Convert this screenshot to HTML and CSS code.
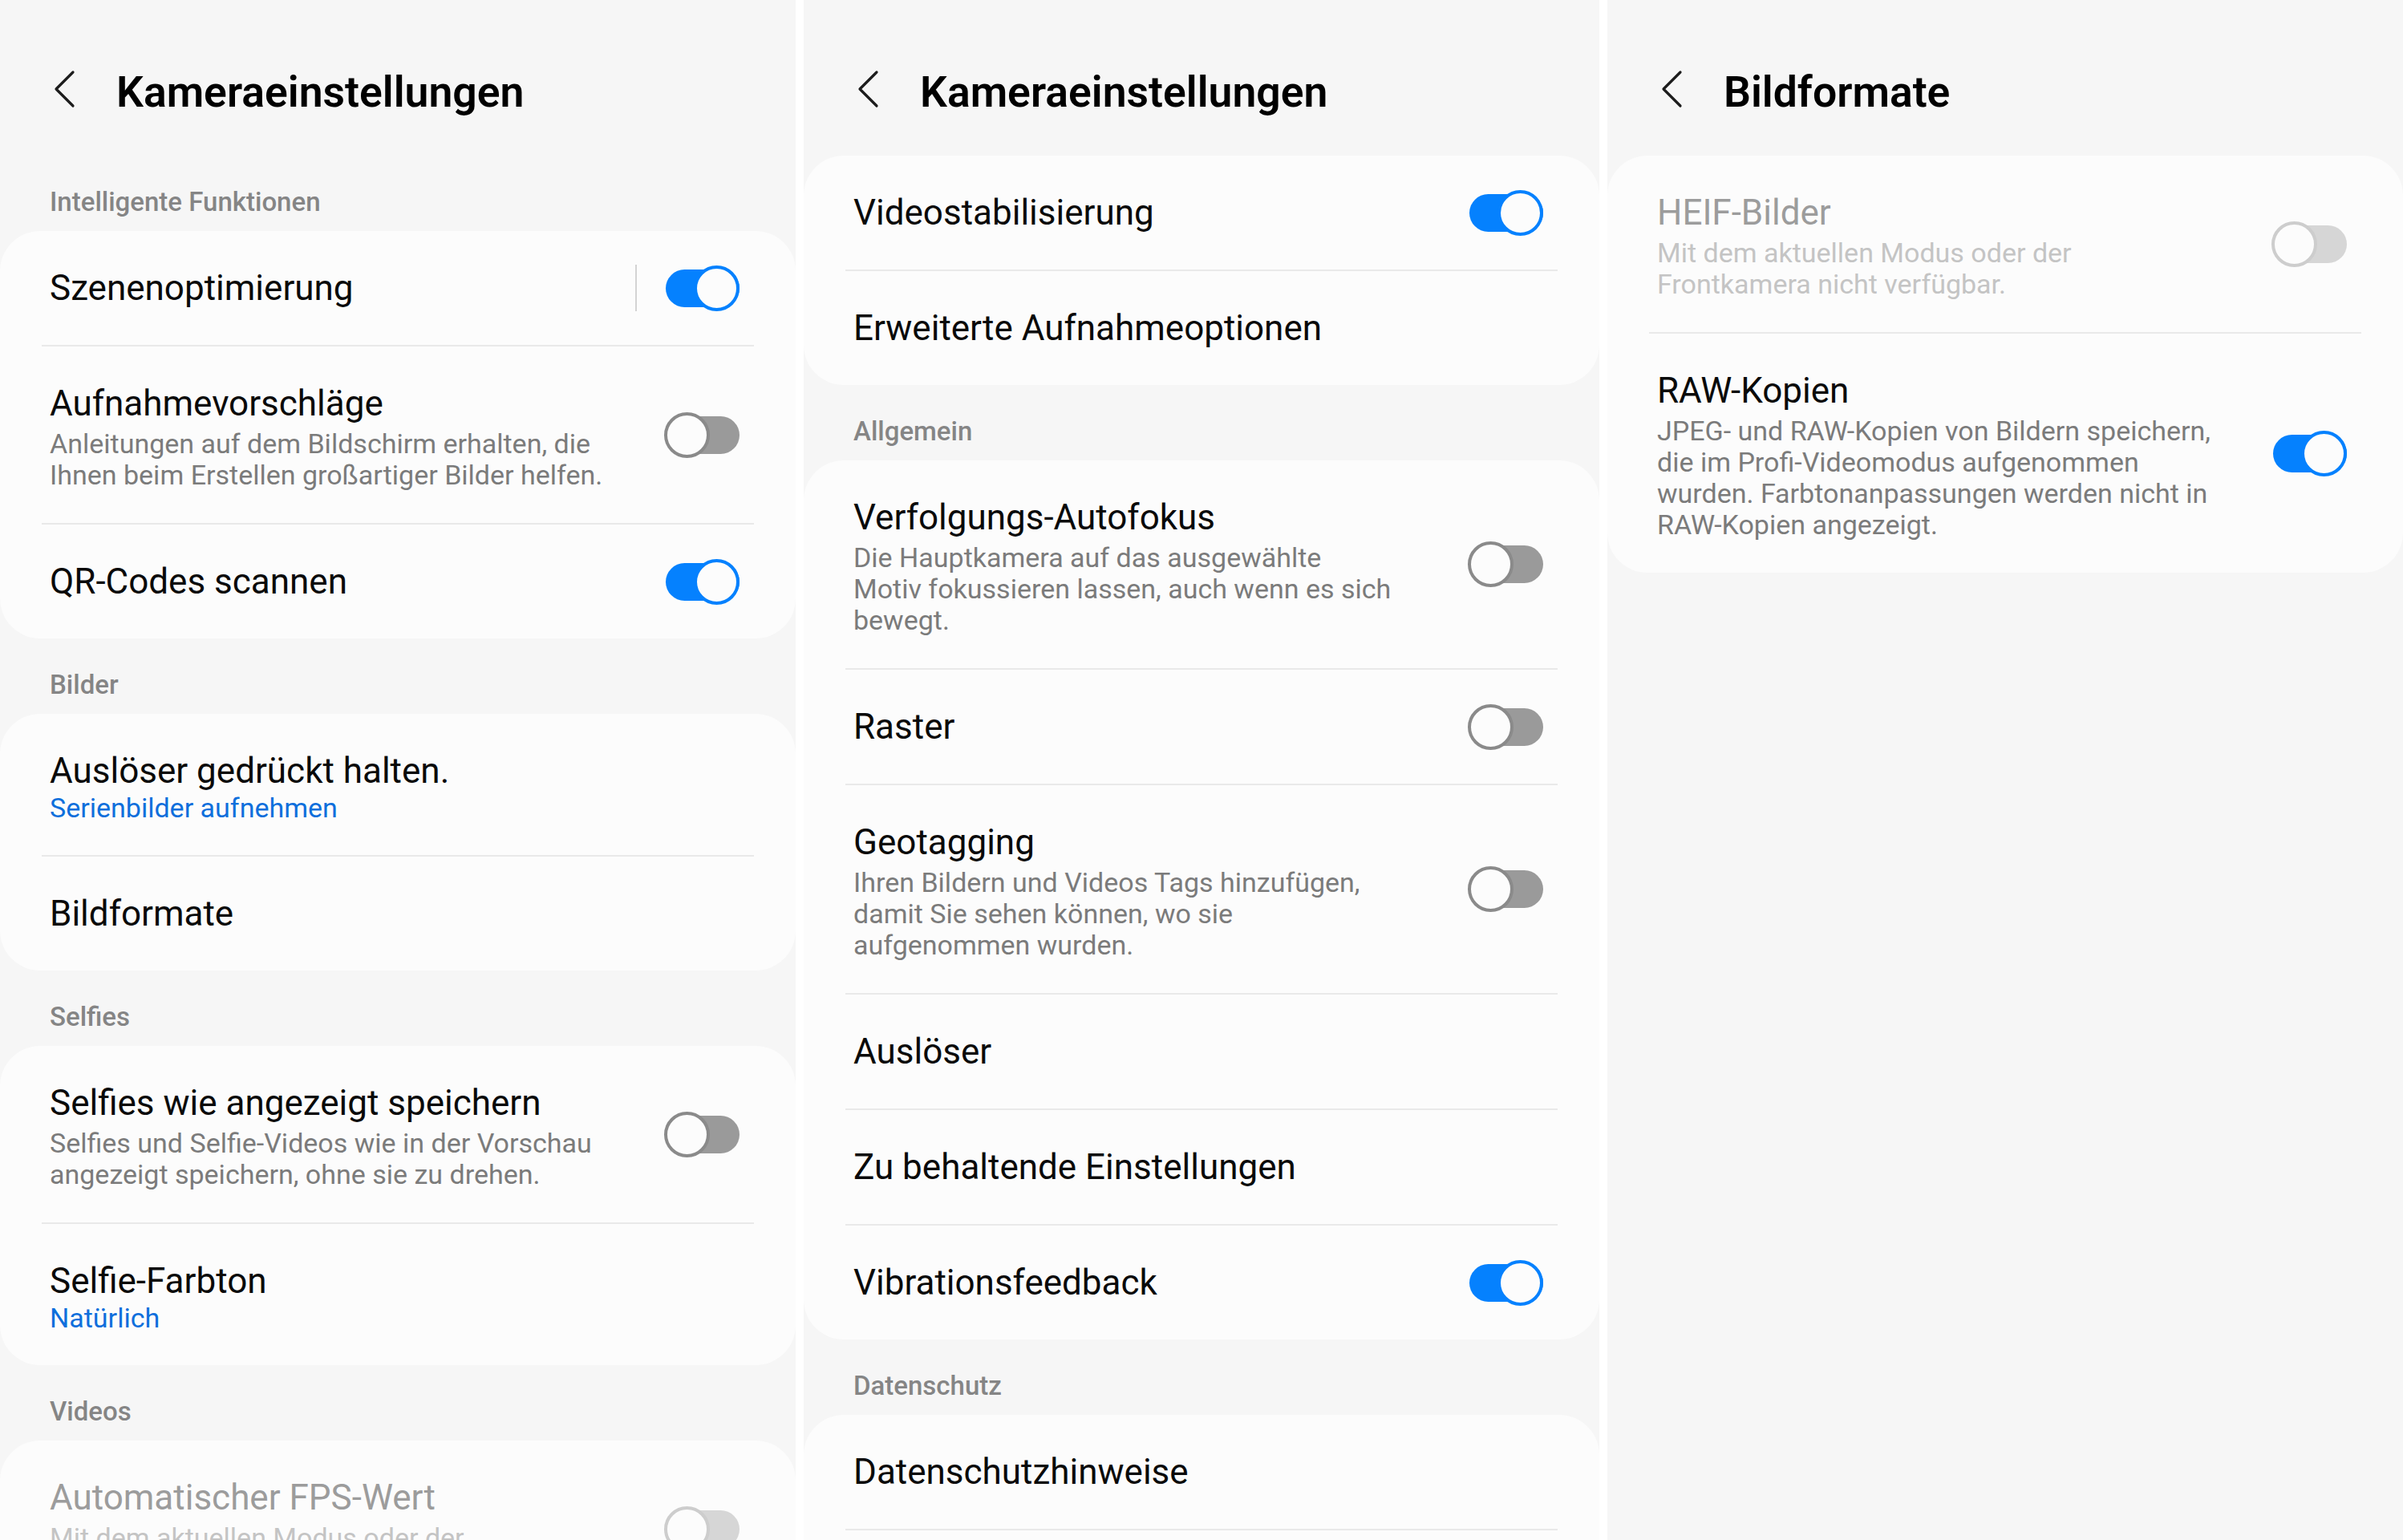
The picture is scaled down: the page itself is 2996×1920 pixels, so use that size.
FILE: index.html
```html
<!DOCTYPE html>
<html>
<head>
    <meta charset="UTF-8">
    <meta name="viewport" content="width=device-width, initial-scale=1.0">
    <title>Kameraeinstellungen</title>
    <link rel="stylesheet" href="styles.css">
</head>
<body>

<div class="screens">

    <!-- Bildschirm 1 -->
    <section class="panel">
        <header class="appbar">
            <svg class="back" viewBox="0 0 28 48"><polyline points="24,3 3,24 24,45"/></svg>
            <h1>Kameraeinstellungen</h1>
        </header>

        <div class="label">Intelligente Funktionen</div>
        <div class="card">
            <div class="row">
                <div class="text"><div class="title">Szenenoptimierung</div></div>
                <span class="vline"></span>
                <span class="switch on"></span>
            </div>
            <div class="row">
                <div class="text">
                    <div class="title">Aufnahmevorschläge</div>
                    <div class="sub">Anleitungen auf dem Bildschirm erhalten, die<br>Ihnen beim Erstellen großartiger Bilder helfen.</div>
                </div>
                <span class="switch"></span>
            </div>
            <div class="row">
                <div class="text"><div class="title">QR-Codes scannen</div></div>
                <span class="switch on"></span>
            </div>
        </div>

        <div class="label">Bilder</div>
        <div class="card">
            <div class="row">
                <div class="text">
                    <div class="title">Auslöser gedrückt halten.</div>
                    <div class="value">Serienbilder aufnehmen</div>
                </div>
            </div>
            <div class="row">
                <div class="text"><div class="title">Bildformate</div></div>
            </div>
        </div>

        <div class="label">Selfies</div>
        <div class="card">
            <div class="row">
                <div class="text">
                    <div class="title">Selfies wie angezeigt speichern</div>
                    <div class="sub">Selfies und Selfie-Videos wie in der Vorschau<br>angezeigt speichern, ohne sie zu drehen.</div>
                </div>
                <span class="switch"></span>
            </div>
            <div class="row">
                <div class="text">
                    <div class="title">Selfie-Farbton</div>
                    <div class="value">Natürlich</div>
                </div>
            </div>
        </div>

        <div class="label">Videos</div>
        <div class="card">
            <div class="row disabled">
                <div class="text">
                    <div class="title">Automatischer FPS-Wert</div>
                    <div class="sub">Mit dem aktuellen Modus oder der<br>Frontkamera nicht verfügbar.</div>
                </div>
                <span class="switch"></span>
            </div>
        </div>
    </section>

    <!-- Bildschirm 2 -->
    <section class="panel">
        <header class="appbar">
            <svg class="back" viewBox="0 0 28 48"><polyline points="24,3 3,24 24,45"/></svg>
            <h1>Kameraeinstellungen</h1>
        </header>

        <div class="card">
            <div class="row">
                <div class="text"><div class="title">Videostabilisierung</div></div>
                <span class="switch on"></span>
            </div>
            <div class="row">
                <div class="text"><div class="title">Erweiterte Aufnahmeoptionen</div></div>
            </div>
        </div>

        <div class="label">Allgemein</div>
        <div class="card">
            <div class="row">
                <div class="text">
                    <div class="title">Verfolgungs-Autofokus</div>
                    <div class="sub">Die Hauptkamera auf das ausgewählte<br>Motiv fokussieren lassen, auch wenn es sich<br>bewegt.</div>
                </div>
                <span class="switch"></span>
            </div>
            <div class="row">
                <div class="text"><div class="title">Raster</div></div>
                <span class="switch"></span>
            </div>
            <div class="row">
                <div class="text">
                    <div class="title">Geotagging</div>
                    <div class="sub">Ihren Bildern und Videos Tags hinzufügen,<br>damit Sie sehen können, wo sie<br>aufgenommen wurden.</div>
                </div>
                <span class="switch"></span>
            </div>
            <div class="row">
                <div class="text"><div class="title">Auslöser</div></div>
            </div>
            <div class="row">
                <div class="text"><div class="title">Zu behaltende Einstellungen</div></div>
            </div>
            <div class="row">
                <div class="text"><div class="title">Vibrationsfeedback</div></div>
                <span class="switch on"></span>
            </div>
        </div>

        <div class="label">Datenschutz</div>
        <div class="card">
            <div class="row">
                <div class="text"><div class="title">Datenschutzhinweise</div></div>
            </div>
            <div class="row">
                <div class="text"><div class="title">Berechtigungen</div></div>
            </div>
        </div>
    </section>

    <!-- Bildschirm 3 -->
    <section class="panel">
        <header class="appbar">
            <svg class="back" viewBox="0 0 28 48"><polyline points="24,3 3,24 24,45"/></svg>
            <h1>Bildformate</h1>
        </header>

        <div class="card">
            <div class="row disabled">
                <div class="text">
                    <div class="title">HEIF-Bilder</div>
                    <div class="sub">Mit dem aktuellen Modus oder der<br>Frontkamera nicht verfügbar.</div>
                </div>
                <span class="switch"></span>
            </div>
            <div class="row">
                <div class="text">
                    <div class="title">RAW-Kopien</div>
                    <div class="sub">JPEG- und RAW-Kopien von Bildern speichern,<br>die im Profi-Videomodus aufgenommen<br>wurden. Farbtonanpassungen werden nicht in<br>RAW-Kopien angezeigt.</div>
                </div>
                <span class="switch on"></span>
            </div>
        </div>
    </section>

</div>

</body>
</html>
```

FILE: styles.css
```css
body {
    margin: 0;
    background: #fff;
    font-family: Roboto, 'Noto Sans', sans-serif;
    color: #0a0a0a;
}
.screens {
    display: grid;
    grid-template-columns: repeat(3, 1fr);
    column-gap: 10px;
    height: 1920px;
}
.panel {
    background: #f6f6f6;
    height: 1920px;
    overflow: hidden;
}
.appbar {
    height: 194px;
    box-sizing: border-box;
    padding: 85px 0 0 67px;
    display: flex;
    align-items: flex-start;
}
.back {
    width: 28px;
    height: 48px;
    margin-top: 2px;
    margin-right: 50px;
    flex-shrink: 0;
}
.back polyline {
    fill: none;
    stroke: #1c1c1c;
    stroke-width: 3.2;
    stroke-linecap: round;
    stroke-linejoin: round;
}
h1 {
    margin: 0;
    font-size: 53.5px;
    line-height: 60px;
    font-weight: 600;
    color: #000;
}
.label {
    padding: 37px 62px 15px;
    font-size: 33px;
    line-height: 42px;
    font-weight: 500;
    color: #858585;
}
.card {
    background: #fcfcfc;
    border-radius: 50px;
}
.row {
    margin: 0 52px;
    padding: 42px 18px 42px 10px;
    display: flex;
    align-items: center;
}
.row + .row {
    border-top: 2px solid #e9e9e9;
}
.text {
    flex: 1;
    min-width: 0;
}
.title {
    font-size: 44px;
    line-height: 58px;
    white-space: nowrap;
}
.sub {
    margin: 2px 0 -2px;
    font-size: 34px;
    line-height: 39px;
    color: #7b7b7b;
    white-space: nowrap;
}
.value {
    font-size: 34px;
    line-height: 34px;
    color: #0e6fdc;
}
.disabled .title {
    color: #9c9c9c;
}
.disabled .sub {
    color: #c4c4c4;
}
.vline {
    width: 2px;
    height: 58px;
    background: #d3d3d3;
    margin-right: 34px;
}

/* Schalter */
.switch {
    position: relative;
    width: 94px;
    height: 57px;
    flex-shrink: 0;
}
.switch::before {
    content: "";
    position: absolute;
    left: 2px;
    right: 0;
    top: 5px;
    height: 47px;
    border-radius: 24px;
    background: #9a9a9a;
}
.switch::after {
    content: "";
    position: absolute;
    left: 0;
    top: 0;
    width: 57px;
    height: 57px;
    box-sizing: border-box;
    border-radius: 50%;
    border: 4px solid #8a8a8a;
    background: #fcfcfc;
}
.switch.on::before {
    background: #0581fe;
}
.switch.on::after {
    left: auto;
    right: 0;
    border-color: #0581fe;
}
.disabled .switch::before {
    background: #d6d6d6;
}
.disabled .switch::after {
    border-color: #cdcdcd;
}
```
